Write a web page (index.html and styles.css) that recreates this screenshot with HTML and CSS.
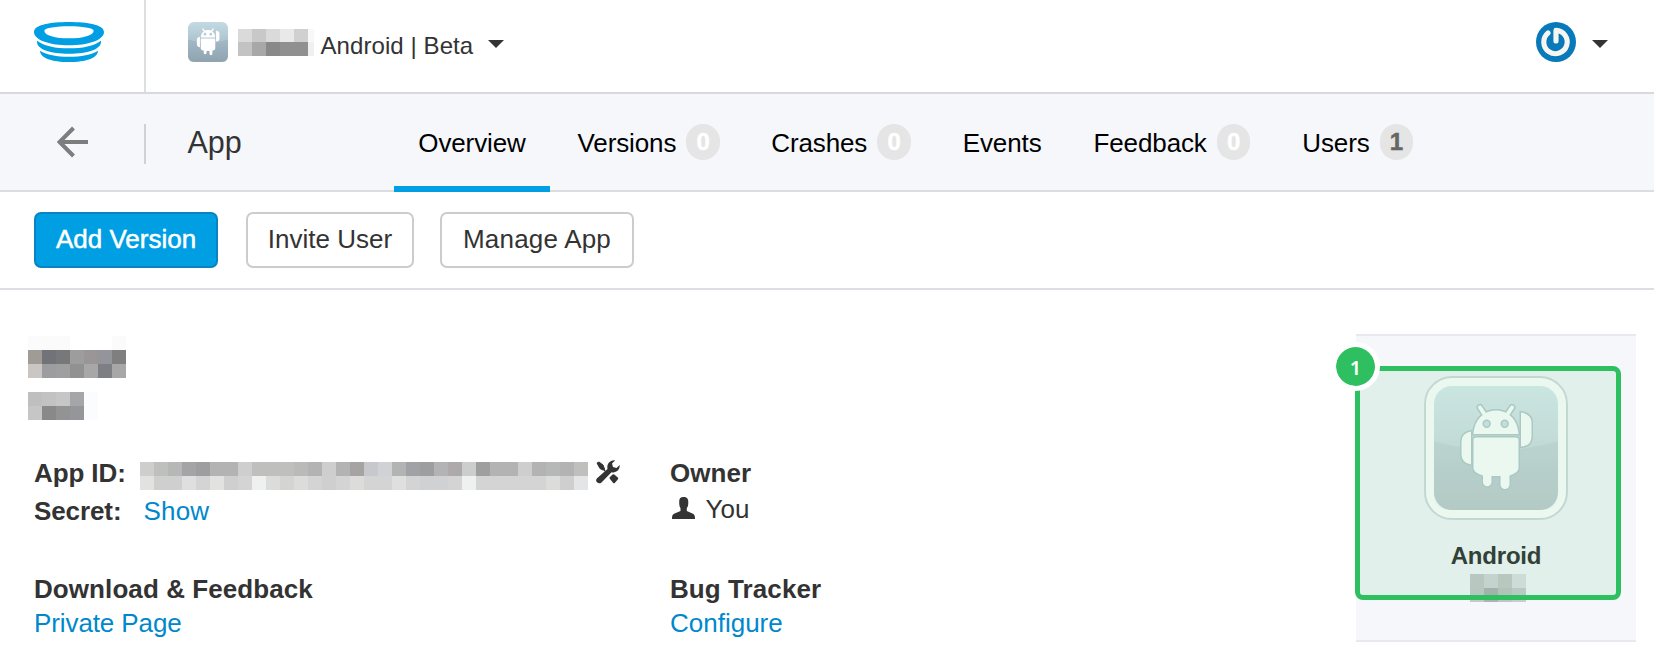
FILE: index.html
```html
<!DOCTYPE html>
<html lang="en">
<head>
<meta charset="utf-8">
<title>App Overview</title>
<link rel="stylesheet" href="styles.css">
</head>
<body>
<svg class="defs" width="0" height="0" aria-hidden="true">
  <defs>
    <symbol id="robot" viewBox="0 0 124 124">
      <path d="M46 21.500L51 29M78 21.500L73 29" fill="none" stroke="currentColor" stroke-width="4" stroke-linecap="round"/>
      <path fill-rule="evenodd" d="M39.500 48C40 39 44 32 50 28C56 23.300 68 23.300 74 28C80 32 84 39 84.500 48ZM48.500 37.700a4.200 4.200 0 1 0 8.400 0a4.200 4.200 0 1 0-8.400 0ZM66.500 37.700a4.200 4.200 0 1 0 8.400 0a4.200 4.200 0 1 0-8.400 0Z"/>
      <path d="M42 51.500H82Q84.500 51.500 84.500 54V82Q84.500 87 75.500 89.500V98.500A4.500 4.500 0 0 1 66.500 98.500V90H57.500V96A4.250 4.250 0 0 1 49 96V89.500Q39.500 87 39.500 82V54Q39.500 51.500 42 51.500Z"/>
      <path d="M37 45.500V78.500Q27.500 77 27.500 68V56Q27.500 47 37 45.500Z"/>
      <path d="M87 26.500Q97.500 28 97.500 37V50Q97.500 60 87 60.500Z"/>
    </symbol>
    <linearGradient id="sky" x2="0" y2="1"><stop stop-color="#c3dae5"/><stop offset="1" stop-color="#95a8b3"/></linearGradient>
    <linearGradient id="pale" x2="0" y2="1"><stop stop-color="#dcebf0"/><stop offset="1" stop-color="#c8d0d5"/></linearGradient>
  </defs>
</svg>

<header class="topbar">
  <a class="brand">
    <svg width="70" height="40" viewBox="0 0 210 120" fill="#009ee2">
      <path fill-rule="evenodd" d="M0 30C0 8 50 0 105 0S210 8 210 30C210 55 160 70 105 70S0 55 0 30ZM31 26C31 40 64 49 105 49S179 40 179 26C179 8 31 8 31 26Z"/>
      <path d="M9 56C30 72 65 79 105 79S180 72 201 56C204 82 160 95 105 95S6 82 9 56Z"/>
      <path d="M18 86C38 98 68 104 105 104S172 98 192 86C192 108 155 120 105 120S18 108 18 86Z"/>
    </svg>
  </a>
  <div class="app-switch">
    <svg class="app-icon" width="40" height="40" viewBox="0 0 124 124">
      <rect width="124" height="124" rx="18" fill="url(#sky)"/>
      <path d="M0 55Q62 74 124 55V106Q124 124 106 124H18Q0 124 0 106Z" fill="#7f98a6" opacity=".25"/>
      <use href="#robot" fill="#fff" color="#fff"/>
    </svg>
    <svg class="mask-name" width="76" height="27" shape-rendering="crispEdges">
      <path fill="#dadada" d="M0 0h14v13H0zM28 0h14v13H28z"/><path fill="#c8c8c8" d="M14 0h14v13H14z"/><path fill="#e9e9e9" d="M42 0h14v13H42z"/><path fill="#d0d0d0" d="M56 0h14v13H56z"/><path fill="#f8f8f8" d="M70 0h6v13h-6z"/>
      <path fill="#c3c3c3" d="M0 13h14v14H0z"/><path fill="#a8a8a8" d="M14 13h14v14H14z"/><path fill="#898989" d="M28 13h14v14H28z"/><path fill="#909090" d="M42 13h28v14H42z"/><path fill="#f0f0f0" d="M70 13h6v14h-6z"/>
    </svg>
    <span class="app-title">Android | Beta</span>
    <span class="caret"></span>
  </div>
  <div class="account">
    <svg width="40" height="40" viewBox="0 0 40 40">
      <circle cx="20" cy="20" r="20" fill="#0879ba"/>
      <path d="M12.200 11.200A11.500 11.500 0 1 0 20.200 8.800V19.500" fill="none" stroke="#065f95" stroke-width="6.200" stroke-linecap="round" stroke-linejoin="round" opacity=".3"/>
      <path d="M12 11A11.700 11.700 0 1 0 20 8.300V19" fill="none" stroke="#f5f5f2" stroke-width="5.200" stroke-linecap="round" stroke-linejoin="round"/>
    </svg>
    <span class="caret"></span>
  </div>
</header>

<nav class="nav">
  <a class="back">
    <svg width="32" height="32" viewBox="0 0 32 32" fill="none" stroke="#7d7d7d" stroke-width="4"><path d="M31 16H3M16.500 2L2.500 16L16.500 30"/></svg>
  </a>
  <span class="section">App</span>
  <div class="tabs">
    <a class="tab active">Overview</a>
    <a class="tab versions">Versions <b class="count">0</b></a>
    <a class="tab crashes">Crashes <b class="count">0</b></a>
    <a class="tab events">Events</a>
    <a class="tab feedback">Feedback <b class="count">0</b></a>
    <a class="tab users">Users <b class="count filled">1</b></a>
  </div>
</nav>

<div class="toolbar">
  <a class="btn primary">Add Version</a>
  <a class="btn invite">Invite User</a>
  <a class="btn manage">Manage App</a>
</div>

<main class="content">
  <section class="details">
    <div class="masks">
      <svg width="98" height="42" shape-rendering="crispEdges">
        <path fill="#fbfbfb" d="M0 0h42v14H0zM84 0h14v14H84z"/>
        <path fill="#a09b94" d="M0 14h14v14H0z"/><path fill="#717379" d="M14 14h14v14H14z"/><path fill="#77787a" d="M28 14h14v14H28z"/><path fill="#9d9d9d" d="M42 14h14v14H42z"/><path fill="#9a9697" d="M56 14h14v14H56z"/><path fill="#94959a" d="M70 14h14v14H70z"/><path fill="#7f7f7f" d="M84 14h14v14H84z"/>
        <path fill="#cac6c4" d="M0 28h14v14H0z"/><path fill="#9d9da0" d="M14 28h14v14H14z"/><path fill="#9f9f9f" d="M28 28h14v14H28z"/><path fill="#919191" d="M42 28h14v14H42z"/><path fill="#a7a7a7" d="M56 28h14v14H56zM84 28h14v14H84z"/><path fill="#7e7f84" d="M70 28h14v14H70z"/>
      </svg>
      <svg width="70" height="28" shape-rendering="crispEdges">
        <path fill="#bfbfbf" d="M0 0h14v14H0z"/><path fill="#c2c2c2" d="M14 0h14v14H14z"/><path fill="#c6c6c6" d="M28 0h14v14H28zM0 14h14v14H0z"/><path fill="#a6a6a9" d="M42 0h14v14H42z"/><path fill="#fbfcfe" d="M56 0h14v28H56z"/>
        <path fill="#898989" d="M14 14h14v14H14z"/><path fill="#939393" d="M28 14h14v14H28z"/><path fill="#949699" d="M42 14h14v14H42z"/>
      </svg>
    </div>
    <div class="facts">
      <dl class="ids">
        <div class="pair">
          <dt>App ID:</dt>
          <dd class="id-value">
            <svg width="448" height="28" shape-rendering="crispEdges">
              <path fill="#b3b3b3" d="M0 0h448v14H0z"/><path fill="#d4d4d4" d="M0 14h448v14H0z"/>
              <path fill="#cecece" d="M0 0h14v14H0zM98 0h14v14H98zM182 0h14v14h-14zM378 0h14v14h-14z"/>
              <path fill="#bfbfbe" d="M14 0h14v14H14zM112 0h42v14h-42zM434 0h14v14h-14z"/>
              <path fill="#a4a4a6" d="M42 0h14v14H42z"/><path fill="#9e9ea0" d="M56 0h14v14H56zM280 0h14v14h-14z"/>
              <path fill="#b5b8b7" d="M28 0h14v14H28zM406 0h14v14h-14z"/><path fill="#bababa" d="M154 0h14v14h-14z"/>
              <path fill="#a6a4a2" d="M210 0h14v14h-14z"/><path fill="#c6c8ce" d="M224 0h14v14h-14z"/><path fill="#d1d2d5" d="M238 0h14v14h-14z"/>
              <path fill="#a0a2a5" d="M266 0h14v14h-14z"/><path fill="#aeaaab" d="M308 0h14v14h-14z"/><path fill="#cbcecd" d="M322 0h14v14h-14z"/><path fill="#9f9f9f" d="M336 0h14v14h-14z"/>
              <path fill="#e2e2e1" d="M0 14h14v14H0zM70 14h14v14H70z"/><path fill="#dfdfe0" d="M42 14h14v14H42zM252 14h14v14h-14z"/>
              <path fill="#cfcfcf" d="M14 14h28v14H14zM84 14h14v14H84zM182 14h14v14h-14zM420 14h14v14h-14z"/>
              <path fill="#eff1f0" d="M112 14h14v14h-14zM322 14h14v14h-14z"/><path fill="#dcdddb" d="M126 14h14v14h-14zM154 14h14v14h-14zM210 14h14v14h-14zM406 14h14v14h-14z"/>
              <path fill="#cfd1d3" d="M280 14h28v14h-28z"/><path fill="#e4e5e7" d="M434 14h14v14h-14z"/>
            </svg>
            <svg class="tools" width="24" height="24" viewBox="0 0 24 24" fill="#333">
              <path d="M1 3L3 2L7 5L8.500 9L7 10L4 8.500Z" stroke="#333" stroke-linejoin="round"/>
              <path d="M14.800 18L17.500 15.500L21 18.500L18 22Z" stroke="#333" stroke-width="2.500" stroke-linejoin="round"/>
              <path d="M7.500 9L9 11" stroke="#333" stroke-width="1.500"/>
              <path d="M11.500 9C10.500 4 14 0 19 .4L16 3.500L17 7L20.500 8L23.700 5C24 10 20 13.200 15.500 12.200L5.500 22.500C2.500 25-1.500 21.500 .8 18.500Z"/>
            </svg>
          </dd>
        </div>
        <div class="pair"><dt>Secret:</dt><dd class="secret"><a class="link">Show</a></dd></div>
      </dl>
      <dl class="owner">
        <dt>Owner</dt>
        <dd><svg class="person" width="23" height="22" viewBox="0 0 23 22" fill="#333"><path d="M11.500 0C15 0 16.300 1.500 16.300 5C16.300 8 16 10 14.800 11V14L21 16.700C22.500 17.500 23 18.500 23 22H0C0 18.500 .5 17.500 2 16.700L8.500 14V11C7.500 10 7.200 8 7.200 5C7.100 1.500 8.500 0 11.500 0Z"/></svg>You</dd>
      </dl>
      <dl class="download">
        <dt>Download &amp; Feedback</dt>
        <dd><a class="link">Private Page</a></dd>
      </dl>
      <dl class="tracker">
        <dt>Bug Tracker</dt>
        <dd><a class="link">Configure</a></dd>
      </dl>
    </div>
  </section>

  <aside class="card">
    <div class="platform-icon">
      <svg width="124" height="124" viewBox="0 0 124 124">
        <rect width="124" height="124" rx="18" fill="url(#pale)"/>
        <path d="M0 55Q62 74 124 55V106Q124 124 106 124H18Q0 124 0 106Z" fill="#a9b9bf" opacity=".2"/>
        <use href="#robot" fill="#b9cbd0" color="#b9cbd0" stroke="#b9cbd0" stroke-width="3"/>
        <path d="M46 21.500L51 29M78 21.500L73 29" fill="none" stroke="#b9cbd0" stroke-width="7" stroke-linecap="round"/>
        <use href="#robot" fill="#fff" color="#fff"/>
      </svg>
    </div>
    <strong class="platform-name">Android</strong>
    <svg class="mask-platform" width="56" height="28" shape-rendering="crispEdges">
      <path fill="#c8cacc" d="M0 0h14v14H0zM28 0h14v14H28z"/><path fill="#d4d6da" d="M14 0h14v14H14z"/><path fill="#dfe0e4" d="M42 0h14v14H42z"/>
      <path fill="#c7c8ca" d="M0 14h14v14H0z"/><path fill="#b0b1b5" d="M14 14h14v14H14z"/><path fill="#c2c4c7" d="M28 14h14v14H28z"/><path fill="#cbcbd0" d="M42 14h14v14H42z"/>
    </svg>
    <div class="highlight"><span class="marker">1</span></div>
  </aside>
</main>
</body>
</html>
```
FILE: styles.css
```css
* { box-sizing: border-box; }
body {
  margin: 0;
  background: #fff;
  color: #333;
  font: 26px/36px "Liberation Sans", Arial, sans-serif;
}
svg { display: block; flex: none; }
.defs { position: absolute; }
dl, dd { margin: 0; }
dt { font-weight: bold; }

.topbar {
  display: flex;
  height: 94px;
  border-bottom: 2px solid #d8d9db;
}
.brand {
  width: 146px;
  padding: 22px 0 0 34px;
  border-right: 2px solid #dedfe0;
}
.app-switch {
  display: flex;
  align-items: flex-start;
  padding: 22px 0 0 42px;
}
.mask-name { margin: 7px 0 0 10px; }
.app-title {
  margin: 6px 0 0 6.5px;
  font-size: 24px;
  letter-spacing: .08px;
  white-space: nowrap;
}
.caret {
  margin: 18px 0 0 15px;
  border: 8px solid transparent;
  border-top-color: #333;
  border-bottom: 0;
}
.account {
  display: flex;
  align-items: flex-start;
  margin-left: auto;
  padding: 22px 46px 0 0;
}
.account .caret { margin-left: 16px; }

.nav {
  display: flex;
  height: 98px;
  background: #f5f7fb;
  border-bottom: 2px solid #dcddde;
}
.back {
  width: 146px;
  height: 40px;
  margin-top: 30px;
  padding: 2px 0 0 57px;
  border-right: 2px solid #d0d1d5;
}
.section {
  width: 206px;
  margin-top: 30px;
  padding-left: 41.5px;
  font-size: 30.5px;
}
.tabs { display: flex; margin-left: 42px; color: #000; }
.tab {
  display: flex;
  align-items: center;
  gap: 10px;
  height: 98px;
  padding-bottom: 1px;
  letter-spacing: -.12px;
  white-space: nowrap;
}
.active {
  width: 156px;
  padding: 5px 0 0;
  border-bottom: 6px solid #009ee2;
  justify-content: center;
}
.versions { margin-left: 27.5px; }
.crashes { margin-left: 51.5px; }
.events { margin-left: 52px; }
.feedback { margin-left: 52px; }
.users { margin-left: 52px; }
.count {
  width: 33.5px;
  height: 36px;
  margin-bottom: 1px;
  border-radius: 18px;
  background: #e5e5e5;
  color: #fff;
  font-size: 24px;
  line-height: 35px;
  text-align: center;
  -webkit-text-stroke: .5px currentColor;
}
.filled { color: #666; }

.toolbar {
  display: flex;
  height: 98px;
  padding: 20px 0 0 34px;
  border-bottom: 2px solid #dbdfe3;
}
.btn {
  width: 184px;
  height: 56px;
  border: 2px solid #ccc;
  border-radius: 7px;
  line-height: 51px;
  text-align: center;
}
.primary { background: #009ee2; border-color: #0784c1; color: #fff; -webkit-text-stroke: .5px #fff; }
.invite { width: 168px; margin-left: 28px; }
.manage { width: 194px; margin-left: 26px; letter-spacing: .2px; }

.content { display: flex; justify-content: space-between; padding-right: 18px; }
.details { padding: 46px 0 0 34px; }
.masks { display: grid; gap: 14px; margin-left: -6px; }
.facts {
  display: grid;
  grid-template-columns: 636px auto;
  margin-top: 34px;
}
.facts dt { letter-spacing: .08px; }
.link { color: #08c; }
.ids { line-height: 38px; }
.pair { display: flex; }
.id-value { display: flex; align-items: flex-start; padding-top: 8px; }
.ids dt { width: 106px; letter-spacing: -.1px; }
.tools { margin: -2px 0 0 8px; }
.secret { padding-left: 3.5px; letter-spacing: .2px; }
.owner { padding-top: 1px; }
.owner dd { display: flex; }
.person { margin: 6px 10.5px 0 2px; }
.download, .tracker { margin-top: 42px; line-height: 34px; }
.download dd { letter-spacing: -.1px; }

.card {
  position: relative;
  display: flex;
  flex-direction: column;
  align-items: center;
  width: 280px;
  height: 308px;
  margin-top: 44px;
  padding-top: 40px;
  background: #f5f7fb;
  border: solid #e8e9ef;
  border-width: 2px 0;
}
.platform-icon {
  padding: 8px;
  border: 2px solid #d4dce0;
  border-radius: 28px;
  background: #fff;
}
.platform-name { margin-top: 18px; font-size: 24px; letter-spacing: -.2px; }
.mask-platform { margin-left: 4px; }

/* Callout frame laid over the card */
.highlight {
  position: absolute;
  left: -1px;
  top: 30px;
  width: 266px;
  height: 234px;
  border: 5px solid #2dbf60;
  border-radius: 8px;
  background: rgba(45, 191, 96, .1);
  background-clip: padding-box;
}
.marker {
  position: absolute;
  left: -29px;
  top: -29px;
  width: 49px;
  height: 49px;
  border: 5px solid #fff;
  border-radius: 50%;
  background: #2dbf60;
  background-clip: padding-box;
  color: #fff;
  font: 600 20px/41px "Noto Sans", "Open Sans", sans-serif;
  text-align: center;
}
```
